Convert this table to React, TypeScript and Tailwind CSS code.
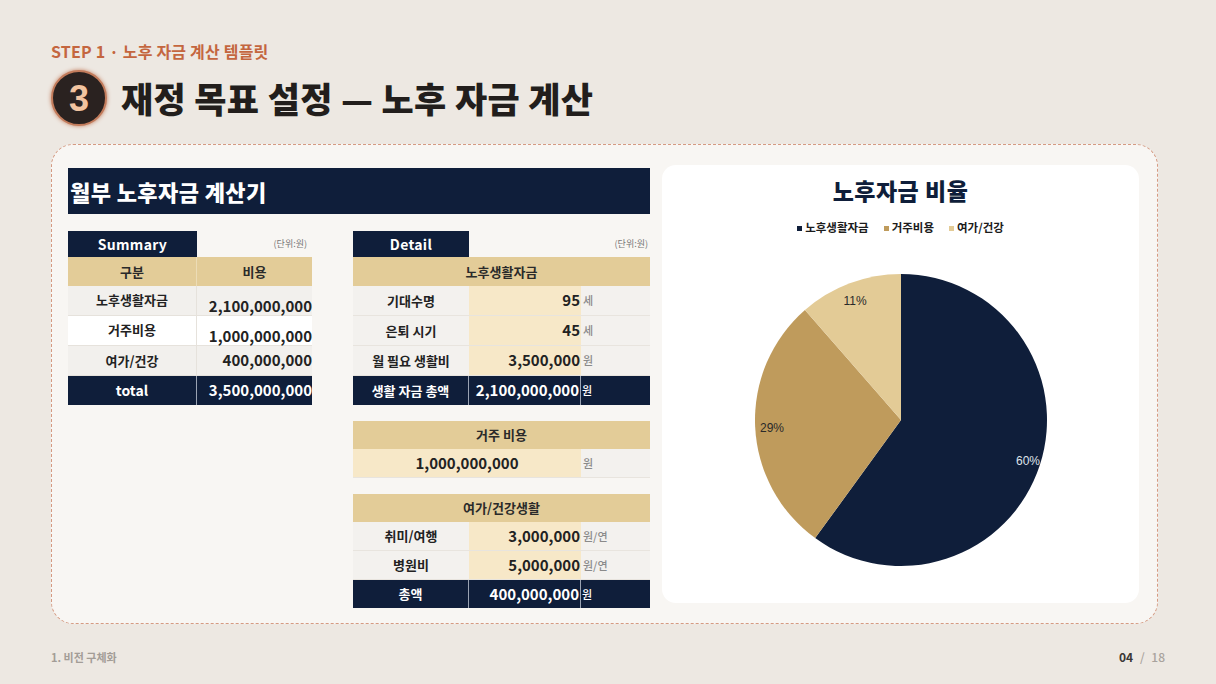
import React from "react";

const KR = "font-['Noto_Sans_CJK_KR','Noto_Sans',sans-serif]";

function Pie() {
  const cx = 239, cy = 185, r = 146;
  const pt = (deg: number) => {
    const a = (deg * Math.PI) / 180;
    return [cx + r * Math.sin(a), cy - r * Math.cos(a)];
  };
  const a1 = 216, a2 = 216 + (1 / 3.5) * 360;
  const [x1, y1] = pt(a1);
  const [x2, y2] = pt(a2);
  return (
    <svg width="477" height="368" viewBox="0 0 477 368">
      <path d={`M${cx} ${cy} L${cx} ${cy - r} A${r} ${r} 0 1 1 ${x1} ${y1} Z`} fill="#0f1e3a" />
      <path d={`M${cx} ${cy} L${x1} ${y1} A${r} ${r} 0 0 1 ${x2} ${y2} Z`} fill="#bf9b5c" />
      <path d={`M${cx} ${cy} L${x2} ${y2} A${r} ${r} 0 0 1 ${cx} ${cy - r} Z`} fill="#e3cb96" />
      <g fontFamily="'Liberation Sans', Arial, sans-serif" fontSize="12">
        <text x="366" y="230" textAnchor="middle" fill="#dfe3ea">60%</text>
        <text x="110" y="197" textAnchor="middle" fill="#2a2a2a">29%</text>
        <text x="193" y="70" textAnchor="middle" fill="#2a2a2a">11%</text>
      </g>
    </svg>
  );
}

export default function App() {
  const navy = "bg-[#0f1e3a]";
  const gold = "bg-[#e3cc98]";
  return (
    <div className={`w-[1216px] h-[684px] bg-[#ede8e2] overflow-hidden ${KR}`}>
      <div className="pl-[51px] pr-[51px] pt-[41px]">
        <p className="text-[16px] leading-[20px] font-bold text-[#c4663f] tracking-[0.2px]">STEP 1 · 노후 자금 계산 템플릿</p>
        <div className="flex items-center gap-[14px] mt-[9px] h-[56px]">
          <div className="w-[56px] h-[56px] rounded-full bg-[#2a2220] border-2 border-[#c27b5b] shadow-[0_0_4px_#c27b5b] flex items-center justify-center">
            <span className="text-[36px] leading-none font-bold text-[#f2c4a0] font-['Liberation_Sans',Arial,sans-serif] mt-[1px]">3</span>
          </div>
          <h1 className="text-[35px] leading-[42px] font-black text-[#221e1c] tracking-[0.3px]">재정 목표 설정 — 노후 자금 계산</h1>
        </div>

        <div className="mt-[18px] w-[1107px] h-[480px] border border-dashed border-[#d59a82] rounded-[22px] bg-[#f8f6f3] pl-[16px] pr-[18px] py-[20px] flex gap-[12px]">
          {/* left */}
          <div className="w-[582px] pt-[3px]">
            <div className={`${navy} h-[46px] flex items-center px-[2px]`}>
              <span className="text-white text-[22px] font-extrabold leading-none tracking-[0.4px]">월부 노후자금 계산기</span>
            </div>
            <div className="flex gap-[41px] mt-[17px]">
              {/* Summary */}
              <div className="w-[244px]">
                <div className="flex h-[26px]">
                  <div className={`${navy} w-[129px] flex items-center justify-center text-white text-[14px] font-bold tracking-[0.3px]`}>Summary</div>
                  <div className="flex-1 flex items-center justify-end pr-[5px] text-[9px] text-[#777]">(단위:원)</div>
                </div>
                <div className={`${gold} flex h-[29px] text-[13px] font-bold text-[#2a2a2a]`}>
                  <div className="w-[129px] flex items-center justify-center border-r border-[#ecdcb6]">구분</div>
                  <div className="flex-1 flex items-center justify-center">비용</div>
                </div>
                {[
                  ["노후생활자금", "2,100,000,000", "bg-[#f2f0ed]", true],
                  ["거주비용", "1,000,000,000", "bg-white", true],
                  ["여가/건강", "400,000,000", "bg-[#f2f0ed]", false],
                ].map(([l, v, bg, low]) => (
                  <div key={l as string} className={`${bg} flex h-[30px] border-b border-[#e6e2dc] text-[#222]`}>
                    <div className={`w-[129px] flex justify-center text-[13px] font-bold border-r border-[#e6e2dc] ${low ? "items-start pt-[4px]" : "items-center"}`}>{l}</div>
                    <div className={`flex-1 flex justify-end text-[15px] font-semibold ${low ? "items-end leading-[18px]" : "items-center"}`}>{v}</div>
                  </div>
                ))}
                <div className={`${navy} flex h-[29px] text-white`}>
                  <div className="w-[129px] flex items-center justify-center text-[14px] font-bold border-r border-[#9aa3b3]">total</div>
                  <div className="flex-1 flex items-center justify-end text-[15px] font-semibold">3,500,000,000</div>
                </div>
              </div>

              {/* Detail */}
              <div className="w-[297px]">
                <div className="flex h-[26px]">
                  <div className={`${navy} w-[116px] flex items-center justify-center text-white text-[14px] font-bold tracking-[0.3px]`}>Detail</div>
                  <div className="flex-1 flex items-center justify-end pr-[2px] text-[9px] text-[#777]">(단위:원)</div>
                </div>
                <div className={`${gold} h-[29px] flex items-center justify-center text-[13px] font-bold text-[#2a2a2a]`}>노후생활자금</div>
                {[
                  ["기대수명", "95", "세"],
                  ["은퇴 시기", "45", "세"],
                  ["월 필요 생활비", "3,500,000", "원"],
                ].map(([l, v, u]) => (
                  <div key={l} className="flex h-[30px] border-b border-[#e8e4de]">
                    <div className="w-[116px] bg-[#f3f1ee] flex items-center justify-center text-[13px] font-bold text-[#222]">{l}</div>
                    <div className="w-[112px] bg-[#f7e8c8] flex items-center justify-end pr-[1px] text-[15px] font-semibold text-[#222]">{v}</div>
                    <div className="flex-1 bg-[#f3f1ee] flex items-center pl-[2px] text-[11px] font-medium text-[#8a8a8a]">{u}</div>
                  </div>
                ))}
                <div className={`${navy} flex h-[29px] text-white`}>
                  <div className="w-[116px] flex items-center justify-center text-[13px] font-bold border-r border-[#9aa3b3]">생활 자금 총액</div>
                  <div className="w-[112px] flex items-center justify-end pr-[1px] text-[15px] font-semibold border-r border-[#9aa3b3]">2,100,000,000</div>
                  <div className="flex-1 flex items-center pl-[1px] text-[11px] font-medium">원</div>
                </div>

                <div className="mt-[16px]">
                  <div className={`${gold} h-[28px] flex items-center justify-center text-[13px] font-bold text-[#2a2a2a]`}>거주 비용</div>
                  <div className="flex h-[29px] border-b border-[#e8e4de]">
                    <div className="w-[228px] bg-[#f7e8c8] flex items-center justify-center text-[15px] font-semibold text-[#222]">1,000,000,000</div>
                    <div className="flex-1 bg-[#f3f1ee] flex items-center pl-[2px] text-[11px] font-medium text-[#8a8a8a]">원</div>
                  </div>
                </div>

                <div className="mt-[16px]">
                  <div className={`${gold} h-[28px] flex items-center justify-center text-[13px] font-bold text-[#2a2a2a]`}>여가/건강생활</div>
                  {[
                    ["취미/여행", "3,000,000"],
                    ["병원비", "5,000,000"],
                  ].map(([l, v]) => (
                    <div key={l} className="flex h-[29px] border-b border-[#e8e4de]">
                      <div className="w-[116px] bg-[#f3f1ee] flex items-center justify-center text-[13px] font-bold text-[#222]">{l}</div>
                      <div className="w-[112px] bg-[#f7e8c8] flex items-center justify-end pr-[1px] text-[15px] font-semibold text-[#222]">{v}</div>
                      <div className="flex-1 bg-[#f3f1ee] flex items-center pl-[2px] text-[11px] font-medium text-[#8a8a8a]">원/연</div>
                    </div>
                  ))}
                  <div className={`${navy} flex h-[28px] text-white`}>
                    <div className="w-[116px] flex items-center justify-center text-[13px] font-bold border-r border-[#9aa3b3]">총액</div>
                    <div className="w-[112px] flex items-center justify-end pr-[1px] text-[15px] font-semibold border-r border-[#9aa3b3]">400,000,000</div>
                    <div className="flex-1 flex items-center pl-[1px] text-[11px] font-medium">원</div>
                  </div>
                </div>
              </div>
            </div>
          </div>

          {/* right */}
          <div className="flex-1 bg-white rounded-[14px] flex flex-col items-center">
            <h2 className="mt-[10px] text-[23px] leading-[30px] font-black text-[#0f1e3a] tracking-[0.5px]">노후자금 비율</h2>
            <div className="mt-[16px] h-[14px] flex items-center gap-[15px] text-[11.5px] font-bold text-[#1c1c1c] leading-none">
              <div className="flex items-center gap-[3px]"><span className="w-[5px] h-[5px] bg-[#0f1e3a]" />노후생활자금</div>
              <div className="flex items-center gap-[3px]"><span className="w-[5px] h-[5px] bg-[#bf9b5c]" />거주비용</div>
              <div className="flex items-center gap-[3px]"><span className="w-[5px] h-[5px] bg-[#e3cb96]" />여가/건강</div>
            </div>
            <Pie />
          </div>
        </div>

        <div className="w-[1114px] flex justify-between items-center mt-[24px] h-[18px]">
          <span className="text-[11px] font-bold text-[#a39d97]">1. 비전 구체화</span>
          <span className="text-[12px] font-bold text-[#3a3735]">04 <span className="text-[#a9a39d] font-medium mx-[4px]">/</span> <span className="text-[#a9a39d] font-medium">18</span></span>
        </div>
      </div>
    </div>
  );
}
